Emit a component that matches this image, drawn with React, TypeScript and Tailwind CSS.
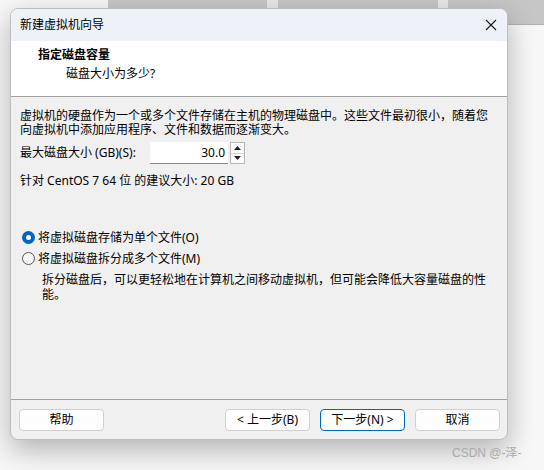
import React from "react";

const font = { fontFamily: '"Noto Sans", "Noto Sans CJK SC", sans-serif' };

function Btn({ children, primary }: { children: React.ReactNode; primary?: boolean }) {
  return (
    <button
      className={
        primary
          ? "w-[85px] h-[22px] rounded-[4px] border border-[#0067c0] bg-[#fdfdfd] text-[12px] leading-[20px] text-black"
          : "w-[85px] h-[22px] rounded-[4px] border border-[#d0d0d0] bg-[#fdfdfd] text-[12px] leading-[20px] text-black"
      }
    >
      {children}
    </button>
  );
}

export default function App() {
  return (
    <div className="relative w-[544px] h-[470px] bg-[#f7f7f7] overflow-hidden" style={font}>
      {/* background desktop strips */}
      <div className="absolute left-[108px] top-0 w-[159px] h-[25px] bg-[#c6c6c6] border-b border-[#b0b0b0]" />
      <div className="absolute left-[278px] top-0 w-[160px] h-[25px] bg-[#c6c6c6] border-b border-[#b0b0b0]" />
      <div className="absolute left-[448px] top-0 w-[96px] h-[25px] bg-[#c6c6c6] border-b border-[#b0b0b0]" />
      <div className="absolute left-[267px] top-0 w-[11px] h-[25px] bg-[#e8e8e8]" />
      <div className="absolute left-[438px] top-0 w-[10px] h-[25px] bg-[#e8e8e8]" />

      <div className="relative pl-[10px] pt-[8px]">
        <div className="w-[498px] h-[432px] rounded-[8px] border border-[#bdbdbd] shadow-[0_10px_28px_rgba(0,0,0,0.28)] overflow-hidden flex flex-col bg-[#f0f0f0]">
          {/* title bar */}
          <div className="h-[32px] shrink-0 bg-[#eef2f8] flex items-center justify-between pl-[9px] pr-[9px]">
            <span className="text-[12px] text-black leading-none">新建虚拟机向导</span>
            <svg width="12" height="12" viewBox="0 0 12 12" className="mr-[1px]">
              <path d="M1 1 L11 11 M11 1 L1 11" stroke="#1a1a1a" strokeWidth="1.1" />
            </svg>
          </div>
          {/* header */}
          <div className="h-[56px] shrink-0 bg-white border-b border-[#a0a0a0] pl-[27px] pt-[5px]">
            <div className="text-[12px] font-bold leading-[18px] text-black">指定磁盘容量</div>
            <div className="text-[12px] leading-[18px] text-black pl-[28px] mt-[1px]">磁盘大小为多少?</div>
          </div>
          {/* body */}
          <div className="flex-1 flex flex-col pl-[9px] pt-[12px] text-[12px] text-black">
            <div className="leading-[14px]">
              虚拟机的硬盘作为一个或多个文件存储在主机的物理磁盘中。这些文件最初很小，随着您
              <br />
              向虚拟机中添加应用程序、文件和数据而逐渐变大。
            </div>
            <div className="flex items-center h-[22px] mt-[5px]">
              <span className="w-[130px] leading-none">最大磁盘大小 (GB)(S):</span>
              <div className="w-[78px] h-[22px] bg-white border-b border-[#888] flex items-center justify-end pr-[3px] text-[12px]">
                30.0
              </div>
              <div className="ml-[2px] w-[15px] h-[22px] border border-[#b8b8b8] bg-[#fbfbfb] flex flex-col">
                <div className="flex-1 flex items-center justify-center border-b border-[#d8d8d8]">
                  <svg width="7" height="4" viewBox="0 0 7 4"><path d="M0 4 L3.5 0 L7 4Z" fill="#222" /></svg>
                </div>
                <div className="flex-1 flex items-center justify-center">
                  <svg width="7" height="4" viewBox="0 0 7 4"><path d="M0 0 L3.5 4 L7 0Z" fill="#222" /></svg>
                </div>
              </div>
            </div>
            <div className="h-[14px] leading-[14px] mt-[10px]">针对 CentOS 7 64 位 的建议大小: 20 GB</div>

            <div className="flex items-center h-[21px] mt-[39px]">
              <div className="w-[13px] h-[13px] rounded-full bg-[#0067c0] flex items-center justify-center ml-[2px]">
                <div className="w-[5px] h-[5px] rounded-full bg-white" />
              </div>
              <span className="ml-[3px] leading-none">将虚拟磁盘存储为单个文件(O)</span>
            </div>
            <div className="flex items-center h-[21px]">
              <div className="w-[13px] h-[13px] rounded-full border border-[#555] bg-[#f7f7f7] ml-[2px]" />
              <span className="ml-[3px] leading-none">将虚拟磁盘拆分成多个文件(M)</span>
            </div>
            <div className="pl-[22px] leading-[15px] mt-[3px]">
              拆分磁盘后，可以更轻松地在计算机之间移动虚拟机，但可能会降低大容量磁盘的性
              <br />
              能。
            </div>
          </div>
          {/* footer */}
          <div className="h-[40px] shrink-0 border-t border-[#a0a0a0] flex items-start pt-[9px] pl-[8px] pr-[7px]">
            <Btn>帮助</Btn>
            <div className="flex-1" />
            <Btn>&lt; 上一步(B)</Btn>
            <div className="w-[10px]" />
            <Btn primary>下一步(N) &gt;</Btn>
            <div className="w-[10px]" />
            <Btn>取消</Btn>
          </div>
        </div>
      </div>
      <div className="absolute left-[452px] top-[445px] text-[12px] text-[#ababab] leading-[16px]" style={{ fontFamily: '"Liberation Sans", "Noto Sans CJK SC", sans-serif' }}>
        CSDN @-泽-
      </div>
    </div>
  );
}
